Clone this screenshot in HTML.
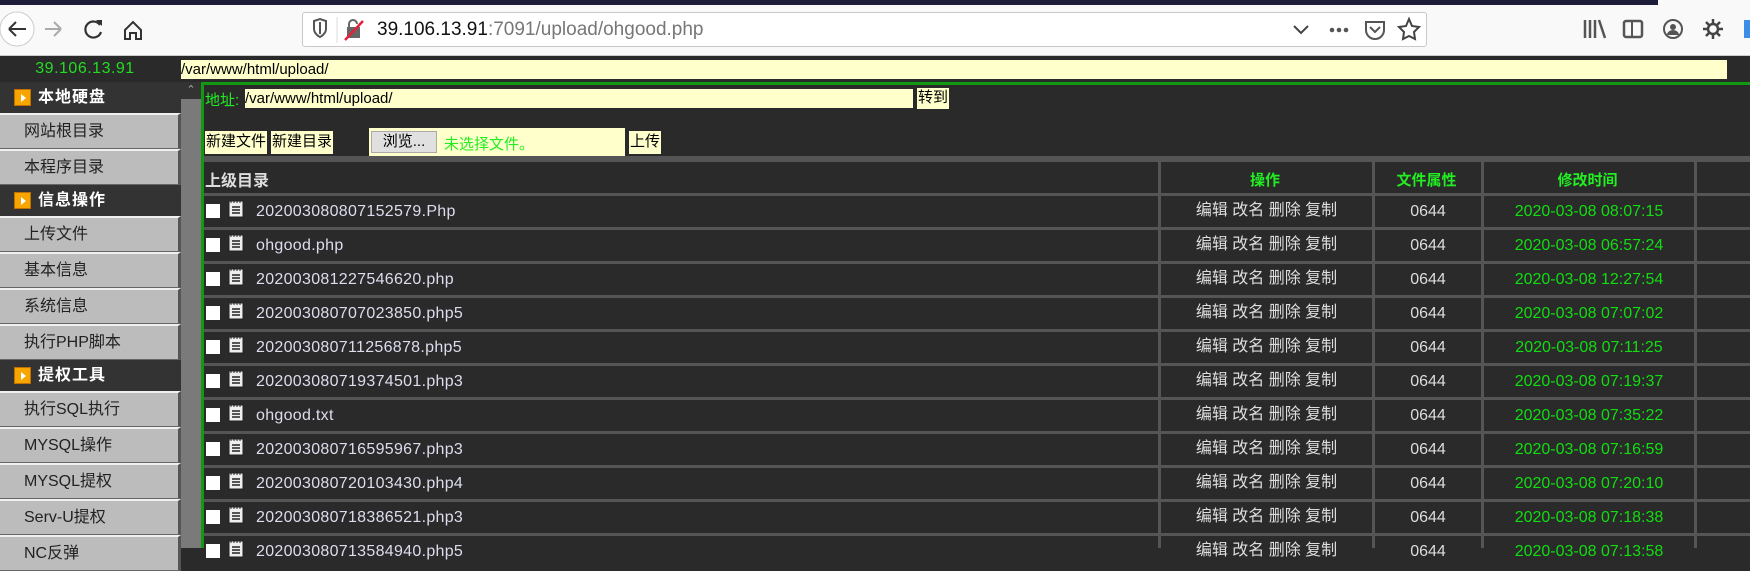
<!DOCTYPE html>
<html><head><meta charset="utf-8"><style>
*{margin:0;padding:0;box-sizing:border-box}
body{width:1750px;height:548px;overflow:hidden;background:#2a2a2a;font-family:"Liberation Sans","Noto Sans CJK SC",sans-serif;position:relative}
.a{position:absolute}
.tb{left:0;top:0;width:1750px;height:56px;background:#f9f9fa;border-bottom:1px solid #ccc}
.url{left:302px;top:12px;width:1125px;height:35px;background:#fff;border:1px solid #c8c8c8;border-radius:3px}
.side{left:0;top:82px;width:181px;height:466px;background:#2e2e2e}
.h{height:31px;background:#333;color:#fff;font-weight:bold;font-size:16px;line-height:31px;padding-left:38px;position:relative;letter-spacing:1px}
.h i{position:absolute;left:14px;top:7px;width:17px;height:17px;background:#f7a600;border:1px solid #c07000}
.h i:after{content:"";position:absolute;left:6px;top:4px;border-left:5px solid #fff;border-top:4px solid transparent;border-bottom:4px solid transparent}
.it{height:36px;background:#bcbcbc;border-top:2px solid #f0f0f0;border-bottom:1px solid #666;border-right:3px solid #555;color:#222;font-size:16px;line-height:33px;padding-left:24px}
.btn{background:#ffffcc;color:#000;font-size:15px;line-height:22px;height:23px;padding:0 1px}
.row{left:204px;width:1546px;height:34px;border-top:3px solid #555}
.row .n{position:absolute;left:52px;top:6px;line-height:20px;color:#dde;font-size:16px;letter-spacing:.3px}
.cb{position:absolute;left:2px;top:8px;width:14px;height:14px;background:#fff}
.ic{position:absolute;left:24px;top:3px}
.op{position:absolute;left:957px;width:211px;text-align:center;top:5px;line-height:20px;color:#ddd;font-size:16px}
.pm{position:absolute;left:1171px;width:106px;text-align:center;top:6px;line-height:20px;color:#ddd;font-size:16px}
.tm{position:absolute;left:1280px;width:210px;text-align:center;top:6px;line-height:20px;color:#11dd11;font-size:16px}
.vl{top:156px;width:3px;height:392px;background:#555}
.hd{color:#22ee22;font-weight:bold;font-size:15px;top:169px;text-align:center}
</style></head><body>
<div class="a tb"></div>
<div class="a" style="left:0;top:0;width:1658px;height:5px;background:#1d1d3a"></div>
<svg class="a" style="left:0;top:5px" width="300" height="50">
<circle cx="17" cy="24" r="17" fill="#fff" stroke="#ccc"/>
<path d="M9 24h17M9 24l7-7M9 24l7 7" stroke="#333" stroke-width="2" fill="none"/>
<path d="M45 24h16M61 24l-7-7M61 24l-7 7" stroke="#aaa" stroke-width="2" fill="none"/>
<path d="M100 20a8 8 0 1 0 1 7" stroke="#333" stroke-width="2.2" fill="none"/><path d="M96 15l6 0 0 6z" fill="#333"/>
<path d="M125 25l8-8 8 8v9h-5v-6h-6v6h-5z" stroke="#333" stroke-width="2" fill="none"/>
</svg>
<div class="a url"></div>
<svg class="a" style="left:308px;top:16px" width="70" height="28">
<path d="M6 5l6-2 6 2v8c0 5-6 8-6 8s-6-3-6-8z" stroke="#555" stroke-width="2" fill="none"/><path d="M12 6v12" stroke="#555" stroke-width="2"/>
<line x1="29" y1="1" x2="29" y2="27" stroke="#ddd"/>
<rect x="39" y="11" width="13" height="11" fill="#666"/><path d="M41 11v-3a4 4 0 0 1 8 0" stroke="#666" stroke-width="2" fill="none"/>
<path d="M37 24l18-19" stroke="#e2213b" stroke-width="2.5"/>
</svg>
<div class="a" style="left:377px;top:19px;font-size:19px;color:#111">39.106.13.91<span style="color:#777">:7091/upload/ohgood.php</span></div>
<svg class="a" style="left:1290px;top:14px" width="140" height="30">
<path d="M4 12l7 7 7-7" stroke="#444" stroke-width="2" fill="none"/>
<circle cx="42" cy="16" r="2.3" fill="#555"/><circle cx="49" cy="16" r="2.3" fill="#555"/><circle cx="56" cy="16" r="2.3" fill="#555"/>
<path d="M76 8h18v8a9 9 0 0 1-18 0z" stroke="#555" stroke-width="2" fill="none"/><path d="M80 13l5 5 5-5" stroke="#555" stroke-width="2" fill="none"/>
<path d="M119 5l3 7 7 1-5 5 1 7-6-3-6 3 1-7-5-5 7-1z" stroke="#444" stroke-width="2" fill="none"/>
</svg>
<svg class="a" style="left:1580px;top:16px" width="170" height="28">
<path d="M5 4v18M10 4v18M15 4v18M19 4l6 18" stroke="#555" stroke-width="2.5"/>
<rect x="44" y="5" width="18" height="16" rx="2" stroke="#555" stroke-width="2.5" fill="none"/><path d="M52 5v16" stroke="#555" stroke-width="2"/>
<circle cx="93" cy="13" r="9" stroke="#555" stroke-width="2" fill="none"/><circle cx="93" cy="11" r="3" fill="#555"/><path d="M87 19a6 5 0 0 1 12 0" fill="#555"/>
<circle cx="133" cy="13" r="5" stroke="#444" stroke-width="2.5" fill="none"/><path d="M133 3v4M133 19v4M123 13h4M139 13h4M126 6l3 3M137 17l3 3M126 20l3-3M137 9l3-3" stroke="#444" stroke-width="2.5"/>
<rect x="164" y="4" width="8" height="18" fill="#3b8de8"/>
</svg>
<div class="a" style="left:0;top:56px;width:1750px;height:26px;background:#2a2a2a"></div>
<div class="a" style="left:0;top:56px;width:170px;height:26px;color:#22dd22;font-size:16px;text-align:center;line-height:26px;letter-spacing:.5px">39.106.13.91</div>
<div class="a" style="left:181px;top:60px;width:1546px;height:19px;background:#ffffcc;font-size:15px;line-height:19px;color:#000">/var/www/html/upload/</div>
<div class="a side">
<div class="h"><i></i>本地硬盘</div><div class="it">网站根目录</div><div class="it">本程序目录</div>
<div class="h"><i></i>信息操作</div><div class="it">上传文件</div><div class="it">基本信息</div><div class="it">系统信息</div><div class="it">执行PHP脚本</div>
<div class="h"><i></i>提权工具</div><div class="it">执行SQL执行</div><div class="it">MYSQL操作</div><div class="it">MYSQL提权</div><div class="it">Serv-U提权</div><div class="it">NC反弹</div>
</div>
<div class="a" style="left:181px;top:82px;width:20px;height:466px;background:#7a7a7a"></div>
<div class="a" style="left:181px;top:82px;width:20px;height:17px;background:#333;color:#aaa;font-size:11px;text-align:center;line-height:17px">&#8963;</div>
<div class="a" style="left:201px;top:82px;width:3px;height:466px;background:#119911"></div>
<div class="a" style="left:201px;top:82px;width:1549px;height:3px;background:#119911"></div>
<div class="a" style="left:205px;top:89px;color:#22ee22;font-size:15px">地址:</div>
<div class="a" style="left:245px;top:89px;width:668px;height:19px;background:#ffffcc;font-size:15px;line-height:19px">/var/www/html/upload/</div>
<div class="a btn" style="left:917px;top:88px;line-height:20px;height:21px">转到</div>
<div class="a btn" style="left:205px;top:131px">新建文件</div>
<div class="a btn" style="left:271px;top:131px">新建目录</div>
<div class="a" style="left:369px;top:128px;width:256px;height:28px;background:#ffffcc"></div>
<div class="a" style="left:371px;top:131px;width:66px;height:22px;background:#e0e0e0;border:1px solid #aaa;font-size:15px;text-align:center;line-height:20px">浏览...</div>
<div class="a" style="left:444px;top:133px;color:#22ee22;font-size:15px">未选择文件。</div>
<div class="a btn" style="left:629px;top:131px">上传</div>
<div class="a" style="left:204px;top:156px;width:1546px;height:6px;background:#555"></div>
<div class="a" style="left:205px;top:167px;color:#ddd;font-weight:bold;font-size:16px">上级目录</div>
<div class="a hd" style="left:1158px;width:214px">操作</div>
<div class="a hd" style="left:1372px;width:109px">文件属性</div>
<div class="a hd" style="left:1481px;width:213px">修改时间</div>
<div id="rows"></div>
<div class="a vl" style="left:1158px"></div><div class="a vl" style="left:1372px"></div><div class="a vl" style="left:1481px"></div><div class="a vl" style="left:1694px"></div>
<script>
var f=[["202003080807152579.Php","08:07:15"],["ohgood.php","06:57:24"],["202003081227546620.php","12:27:54"],["202003080707023850.php5","07:07:02"],["202003080711256878.php5","07:11:25"],["202003080719374501.php3","07:19:37"],["ohgood.txt","07:35:22"],["202003080716595967.php3","07:16:59"],["202003080720103430.php4","07:20:10"],["202003080718386521.php3","07:18:38"],["202003080713584940.php5","07:13:58"]];
var h="";
f.forEach(function(r,i){h+='<div class="a row" style="top:'+(193+34*i)+'px"><div class="cb"></div><svg class="ic" width="17" height="19"><rect x="1" y="2" width="14" height="16" fill="#eee" stroke="#222"/><path d="M3 1v3M6 1v3M9 1v3M12 1v3" stroke="#222"/><path d="M4 8h8M4 11h8M4 14h8" stroke="#222" stroke-width="1.4"/></svg><div class="n">'+r[0]+'</div><div class="op">编辑 改名 删除 复制</div><div class="pm">0644</div><div class="tm">2020-03-08 '+r[1]+'</div></div>';});
document.getElementById("rows").innerHTML=h;
</script>
</body></html>
